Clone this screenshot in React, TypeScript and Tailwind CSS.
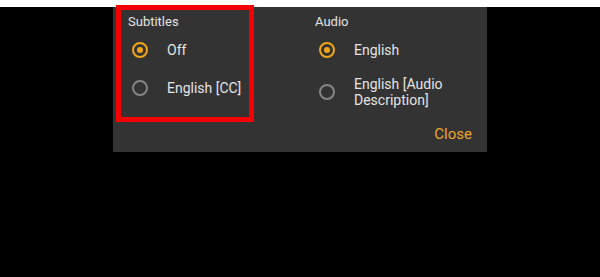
import React, { useState } from "react";

const Radio = ({ checked }: { checked: boolean }) => (
  <span
    className={`flex h-[16px] w-[16px] shrink-0 items-center justify-center rounded-full border-2 ${
      checked ? "border-[#f2a516]" : "border-[#858585]"
    }`}
  >
    {checked && <span className="h-[6px] w-[6px] rounded-full bg-[#f2a516]" />}
  </span>
);

const App = () => {
  const [subtitle, setSubtitle] = useState("off");
  const [audio, setAudio] = useState("en");

  return (
    <div className="min-h-screen bg-black font-['Roboto',sans-serif] text-[#e4e4e4]">
      {/* Track picker panel */}
      <div className="ml-[113px] mt-[7px] flex h-[145px] w-[374px] bg-[#333333]">
        {/* Subtitles (highlighted) */}
        <div className="-mt-[2px] ml-[3px] h-[117px] w-[138px] border-[5px] border-[#f40000] pl-[7px] pt-[4px]">
          <div className="text-[13px] leading-[16px]">Subtitles</div>
          <div
            className="mt-[10px] flex h-[20px] cursor-pointer items-center pl-[4px]"
            onClick={() => setSubtitle("off")}
          >
            <Radio checked={subtitle === "off"} />
            <span className="ml-[19px] text-[14px]">Off</span>
          </div>
          <div
            className="mt-[18px] flex h-[20px] cursor-pointer items-center pl-[4px]"
            onClick={() => setSubtitle("cc")}
          >
            <Radio checked={subtitle === "cc"} />
            <span className="ml-[19px] text-[14px]">English [CC]</span>
          </div>
        </div>

        {/* Audio */}
        <div className="ml-[61px] flex flex-1 flex-col pt-[7px]">
          <div className="text-[13px] leading-[16px]">Audio</div>
          <div
            className="mt-[10px] flex h-[20px] cursor-pointer items-center pl-[4px]"
            onClick={() => setAudio("en")}
          >
            <Radio checked={audio === "en"} />
            <span className="ml-[19px] text-[14px]">English</span>
          </div>
          <div
            className="mt-[16px] flex h-[32px] cursor-pointer items-center pl-[4px]"
            onClick={() => setAudio("ad")}
          >
            <Radio checked={audio === "ad"} />
            <span className="ml-[19px] text-[14px] leading-[16px]">
              English [Audio
              <br />
              Description]
            </span>
          </div>
          <button className="mr-[15px] mt-[17px] self-end text-[15px] leading-[18px] text-[#eda52c]">
            Close
          </button>
        </div>
      </div>
    </div>
  );
};

export default App;
